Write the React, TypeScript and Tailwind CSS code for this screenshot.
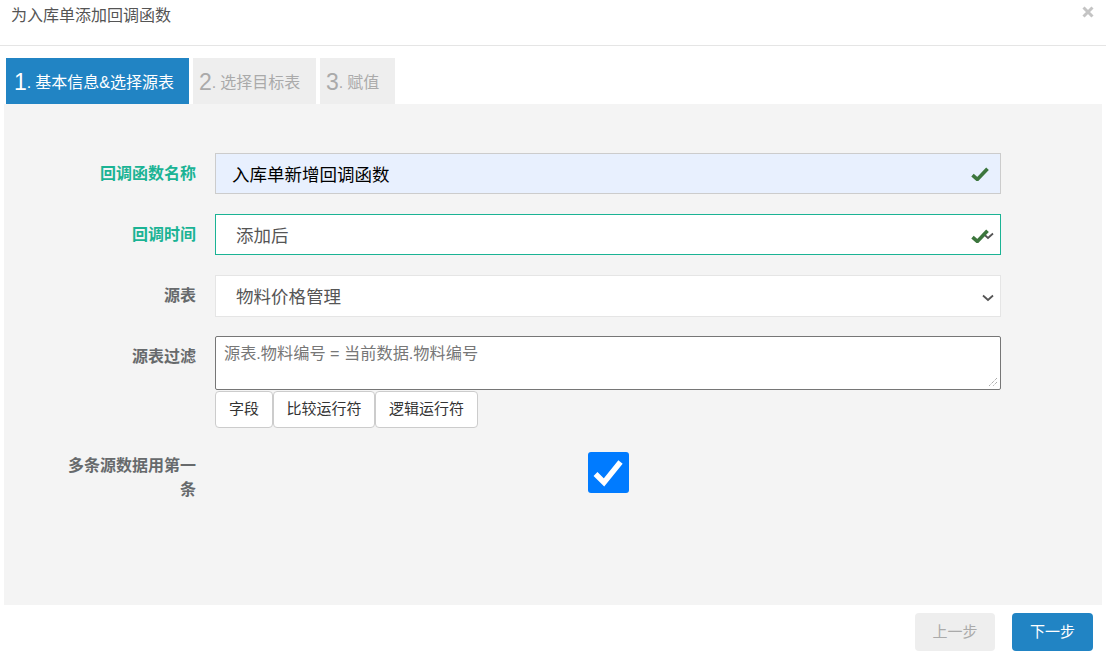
const cjk = { fontFamily: '"Liberation Sans", "Noto Sans CJK SC", sans-serif' };

function OkIcon({ className = "" }: { className?: string }) {
  return (
    <svg viewBox="0 0 16 14" className={className} width="18" height="15">
      <path d="M1 8.5 L5.5 12.5 L15 2.5" fill="none" stroke="#3c763d" strokeWidth="3.4" strokeLinecap="butt" />
    </svg>
  );
}

function Chevron({ className = "" }: { className?: string }) {
  return (
    <svg viewBox="0 0 12 8" className={className} width="12" height="8">
      <path d="M1 1.5 L6 6 L11 1.5" fill="none" stroke="#555" strokeWidth="1.8" />
    </svg>
  );
}

function Label({ text, green }: { text: string; green?: boolean }) {
  return (
    <div
      className={`w-[140px] shrink-0 h-[41px] flex items-center justify-end text-right text-[16px] font-bold ${
        green ? "text-[#1ab394]" : "text-[#676a6c]"
      }`}
    >
      {text}
    </div>
  );
}

export default function App() {
  return (
    <div className="w-[1106px] h-[663px] bg-white overflow-hidden" style={cjk}>
      {/* header */}
      <div className="h-[46px] border-b border-[#e5e5e5] flex items-start justify-between pl-[11px] pr-[12px]">
        <div className="mt-[4px] text-[16px] text-[#555]">为入库单添加回调函数</div>
        <svg className="mt-[6px]" width="12" height="12" viewBox="0 0 12 12">
          <path d="M1.5 1.5 L10.5 10.5 M10.5 1.5 L1.5 10.5" stroke="#c4c4c4" strokeWidth="3" />
        </svg>
      </div>

      {/* steps */}
      <div className="flex gap-[4px] pl-[6px] pt-[12px]">
        <div className="h-[46px] w-[183px] bg-[#2184c4] text-white flex items-center pl-[8px] pt-[3px]">
          <span className="text-[23px] leading-none">1</span>
          <span className="text-[16px] mr-[4px]">.</span>
          <span className="text-[16px]">基本信息&amp;选择源表</span>
        </div>
        <div className="h-[46px] w-[123px] bg-[#eeeeee] text-[#aaa] flex items-center pl-[6px] pt-[3px]">
          <span className="text-[23px] leading-none">2</span>
          <span className="text-[16px] mr-[4px]">.</span>
          <span className="text-[16px]">选择目标表</span>
        </div>
        <div className="h-[46px] w-[75px] bg-[#eeeeee] text-[#aaa] flex items-center pl-[6px] pt-[3px]">
          <span className="text-[23px] leading-none">3</span>
          <span className="text-[16px] mr-[4px]">.</span>
          <span className="text-[16px]">赋值</span>
        </div>
      </div>

      {/* form panel */}
      <div className="mx-[4px] h-[501px] bg-[#f4f4f4] pt-[49px] pl-[52px]">
        <div className="flex gap-[19px]">
          <Label text="回调函数名称" green />
          <div className="w-[786px] h-[41px] bg-[#e8f0fe] border border-[#cccccc] flex items-center justify-between pl-[16px] pr-[11px]">
            <span className="text-[17.5px] text-black pt-[3px]">入库单新增回调函数</span>
            <OkIcon />
          </div>
        </div>

        <div className="flex gap-[19px] mt-[20px]">
          <Label text="回调时间" green />
          <div className="relative w-[786px] h-[41px] bg-white border border-[#1ab394] flex items-center pl-[20px]">
            <span className="text-[17.5px] text-[#555] pt-[3px]">添加后</span>
            <Chevron className="absolute right-[6px] top-[17px]" />
            <OkIcon className="absolute right-[11px] top-[13px]" />
          </div>
        </div>

        <div className="flex gap-[19px] mt-[20px]">
          <Label text="源表" />
          <div className="relative w-[786px] h-[42px] bg-white border border-[#e5e5e5] flex items-center pl-[20px]">
            <span className="text-[17.5px] text-[#555] pt-[3px]">物料价格管理</span>
            <Chevron className="absolute right-[6px] top-[18px]" />
          </div>
        </div>

        <div className="flex gap-[19px] mt-[19px]">
          <Label text="源表过滤" />
          <div className="w-[786px]">
            <div className="relative h-[54px] bg-white border border-[#767676] rounded-[2px] pl-[8px] pt-[4px] text-[16.2px] text-[#777]">
              源表.物料编号 = 当前数据.物料编号
              <svg className="absolute right-[2px] bottom-[2px]" width="10" height="10" viewBox="0 0 10 10">
                <path d="M9 1 L1 9 M9 5 L5 9" stroke="#888" strokeWidth="1" strokeDasharray="1 1" />
              </svg>
            </div>
            <div className="flex mt-[1px]">
              {[
                ["字段", "w-[58px]"],
                ["比较运行符", "w-[102px]"],
                ["逻辑运行符", "w-[103px]"],
              ].map(([t, w]) => (
                <div
                  key={t}
                  className={`${w} h-[37px] bg-white border border-[#cccccc] rounded-[4px] flex items-center justify-center text-[15px] text-[#333]`}
                >
                  {t}
                </div>
              ))}
            </div>
          </div>
        </div>

        <div className="flex gap-[19px] mt-[24px]">
          <div className="w-[140px] shrink-0 pt-[2px] text-right text-[16px] leading-[24px] font-bold text-[#676a6c]">
            多条源数据用第一条
          </div>
          <div className="w-[786px] flex justify-center">
            <div className="w-[41px] h-[41px] bg-[#007bff] rounded-[3px] flex items-center justify-center">
              <svg width="32" height="32" viewBox="0 0 32 32">
                <path d="M3.5 17 L12 25.5 L28.5 5" fill="none" stroke="white" strokeWidth="5.5" />
              </svg>
            </div>
          </div>
        </div>
      </div>

      {/* footer */}
      <div className="flex justify-end gap-[17px] pt-[8px] pr-[13px]">
        <div className="w-[80px] h-[38px] rounded-[4px] bg-[#eeeeee] text-[#aaa] text-[15px] flex items-center justify-center">
          上一步
        </div>
        <div className="w-[81px] h-[38px] rounded-[4px] bg-[#2184c4] text-white text-[15px] flex items-center justify-center">
          下一步
        </div>
      </div>
    </div>
  );
}
